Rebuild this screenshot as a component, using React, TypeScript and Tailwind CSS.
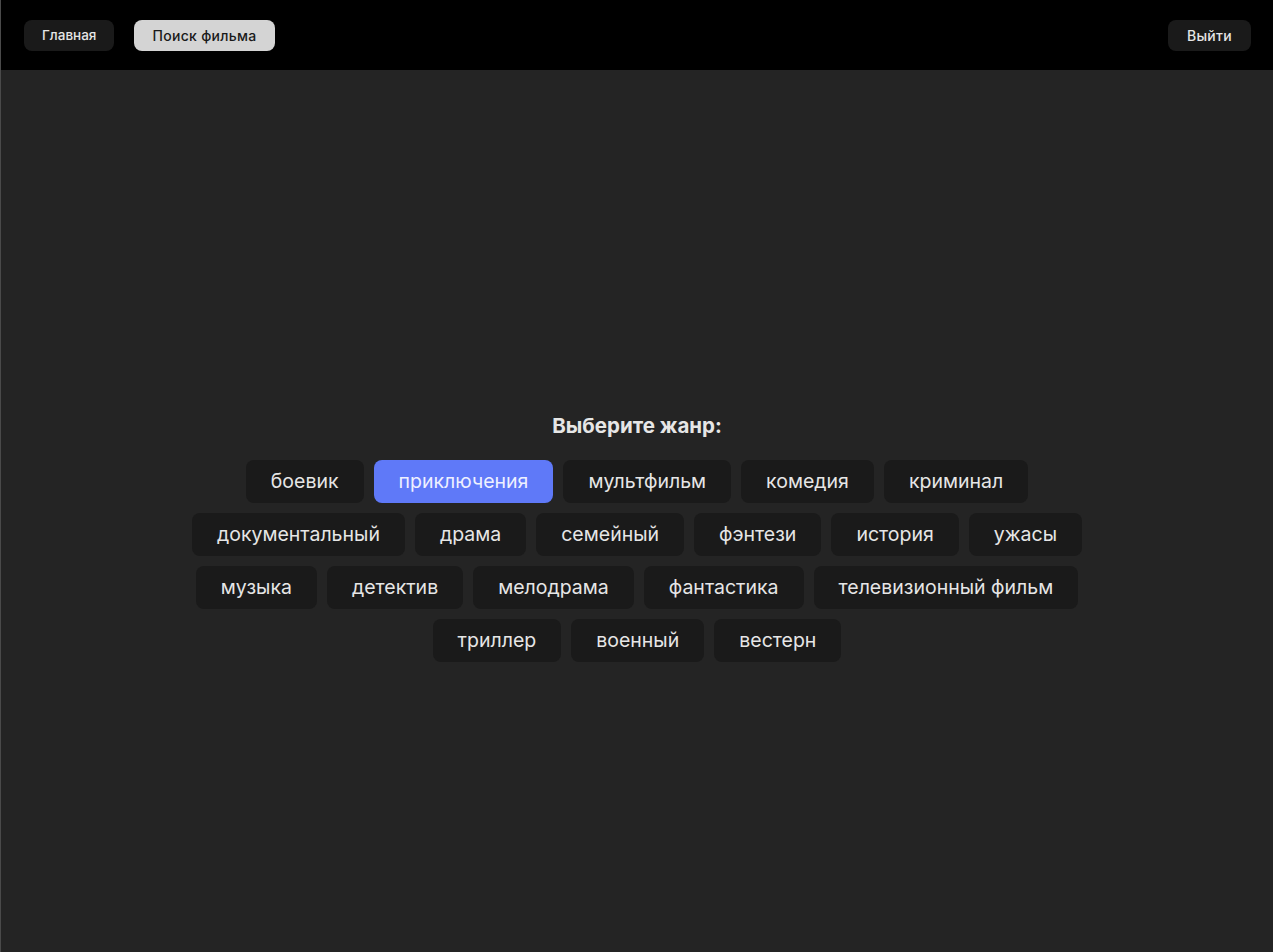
import { useState } from "react";

const genres = [
  "боевик",
  "приключения",
  "мультфильм",
  "комедия",
  "криминал",
  "документальный",
  "драма",
  "семейный",
  "фэнтези",
  "история",
  "ужасы",
  "музыка",
  "детектив",
  "мелодрама",
  "фантастика",
  "телевизионный фильм",
  "триллер",
  "военный",
  "вестерн",
];

export default function App() {
  const [selected, setSelected] = useState("приключения");

  return (
    <div className="flex min-h-[952px] flex-col border-l border-[#4a4a4a] bg-[#242424] font-['Inter',sans-serif] text-[#e6e6e6]">
      {/* Top bar */}
      <header className="flex h-[70px] items-center justify-between bg-black pl-[23px] pr-[22px]">
        <nav className="flex items-center gap-5">
          <button
            type="button"
            className="rounded-lg bg-[#1a1a1a] px-[18px] py-[6px] text-[13.5px] leading-[19px] font-medium text-[#e6e6e6]"
          >
            Главная
          </button>
          <button
            type="button"
            className="rounded-lg bg-[#d4d4d4] px-[18px] py-[6px] text-[14px] leading-[19px] font-medium tracking-[0.3px] text-[#1a1a1a]"
          >
            Поиск фильма
          </button>
        </nav>
        <button
          type="button"
          className="rounded-lg bg-[#1a1a1a] px-[19px] py-[6px] text-[14px] leading-[19px] font-medium tracking-[0.3px] text-[#e6e6e6]"
        >
          Выйти
        </button>
      </header>

      {/* Genre picker */}
      <main className="flex flex-1 flex-col items-center justify-center pt-[52px]">
        <h2 className="mb-[21px] text-[20.5px] leading-[27px] font-bold text-[#e6e6e6]">
          Выберите жанр:
        </h2>
        <div className="flex max-w-[900px] flex-wrap justify-center gap-[10px]">
          {genres.map((g) => (
            <button
              key={g}
              type="button"
              onClick={() => setSelected(g)}
              className={`rounded-lg px-[25px] py-[8px] text-[19.5px] leading-[27px] ${
                selected === g ? "bg-[#5f79f8] text-[#eef0ff]" : "bg-[#1a1a1a] text-[#e6e6e6]"
              }`}
            >
              {g}
            </button>
          ))}
        </div>
      </main>
    </div>
  );
}
